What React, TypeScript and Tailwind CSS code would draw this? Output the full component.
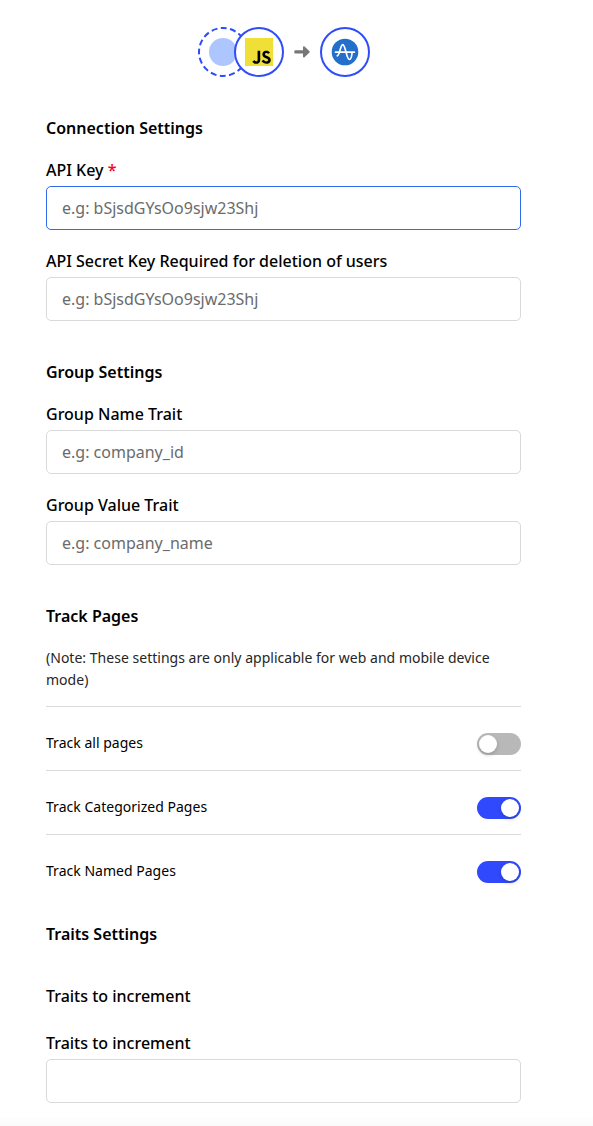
import React from "react";
import { SiJavascript } from "react-icons/si";

function ConnectionIcons() {
  return (
    <div className="ml-[152px] flex h-[50px] items-center">
      <svg className="size-[50px] shrink-0" viewBox="0 0 50 50" fill="none">
        <circle cx="25" cy="25" r="24" stroke="#2f4cfa" strokeWidth="2" strokeDasharray="6 3.425" strokeDashoffset="3" />
        <circle cx="25" cy="25" r="14" fill="#adc6ff" />
      </svg>
      <div className="z-10 -ml-3.5 flex size-[50px] shrink-0 items-center justify-center rounded-full border-2 border-[#2f4cfa] bg-white">
        <SiJavascript className="size-7 bg-black text-[#f0df36]" />
      </div>
      <svg className="mb-px ml-2.5 h-3 w-4 shrink-0" viewBox="0 0 16 12">
        <path d="M1.6 4.3H9V1.2c0-.9.9-1.2 1.5-.6l5 4.7c.4.4.4.8 0 1.2l-5 4.7c-.6.6-1.5.3-1.5-.6V7.5H1.6C.6 7.5.3 6.9.3 5.9s.3-1.6 1.3-1.6Z" fill="#777" />
      </svg>
      <div className="ml-2.5 flex size-[50px] shrink-0 items-center justify-center rounded-full border-2 border-[#2f4cfa] bg-white">
        <svg className="size-7" viewBox="0 0 28 28" fill="none">
          <circle cx="14" cy="14" r="13.3" fill="#246fcb" />
          <path d="M4.5 14.2H23.3M6.3 17.8C9 17.2 9.2 6.6 11.8 6.6c2.7 0 3.6 14.9 6.6 14.9 2 0 2.4-3.8 2.7-7.3" stroke="#fff" strokeWidth="1.7" strokeLinecap="round" strokeLinejoin="round" />
        </svg>
      </div>
    </div>
  );
}

function Heading({ children, className = "" }: { children: React.ReactNode; className?: string }) {
  return <h2 className={`font-semibold ${className}`}>{children}</h2>;
}

interface FieldProps {
  label: string;
  placeholder?: string;
  required?: boolean;
  active?: boolean;
  className?: string;
}

function Field({ label, placeholder, required, active, className = "mt-5" }: FieldProps) {
  return (
    <label className={`block font-medium ${className}`}>
      <span className="block">
        {label}
        {required && <span className="text-[#ff0018]"> *</span>}
      </span>
      <input
        type="text"
        placeholder={placeholder}
        className={`mt-[5px] block h-11 w-full rounded-[5px] border bg-white px-[15px] font-normal outline-none placeholder:text-[#6b6b6b] ${
          active ? "border-[#2f6bed]" : "border-[#d9d9d9]"
        }`}
      />
    </label>
  );
}

function ToggleRow({ label, on, last }: { label: string; on?: boolean; last?: boolean }) {
  return (
    <div className={`flex justify-between pt-[26px] ${last ? "" : "border-b border-[#d9d9d9] pb-[15px]"}`}>
      <span className="-mt-px h-[22px] text-sm leading-[22px] tracking-[0.02px]">{label}</span>
      <button
        type="button"
        role="switch"
        aria-checked={!!on}
        aria-label={label}
        className={`flex h-[22px] w-11 rounded-full p-0.5 ${on ? "justify-end bg-[#3049fd]" : "justify-start bg-[#b8b8b8]"}`}
      >
        <span className="size-[18px] rounded-full bg-white shadow-[0_2px_4px_rgba(0,35,11,0.2)]" />
      </button>
    </div>
  );
}

export default function App() {
  return (
    <main className="flex h-[1126px] w-full flex-col overflow-hidden bg-white font-['Noto_Sans',sans-serif] text-base leading-[22px] text-black">
      <div className="ml-[46px] w-[475px] flex-1 pt-[27px]">
        <ConnectionIcons />

        <Heading className="mt-10">Connection Settings</Heading>
        <Field label="API Key" placeholder="e.g: bSjsdGYsOo9sjw23Shj" required active />
        <Field label="API Secret Key Required for deletion of users" placeholder="e.g: bSjsdGYsOo9sjw23Shj" />

        <Heading className="mt-10">Group Settings</Heading>
        <Field label="Group Name Trait" placeholder="e.g: company_id" />
        <Field label="Group Value Trait" placeholder="e.g: company_name" />

        <Heading className="mt-10">Track Pages</Heading>
        <p className="mt-5 border-b border-[#d9d9d9] pb-[15px] text-sm leading-[22px] tracking-[0.02px] text-[#262626]">
          (Note: These settings are only applicable for web and mobile device mode)
        </p>
        <ToggleRow label="Track all pages" />
        <ToggleRow label="Track Categorized Pages" on />
        <ToggleRow label="Track Named Pages" on last />

        <Heading className="mt-10">Traits Settings</Heading>
        <h3 className="mt-10 font-medium">Traits to increment</h3>
        <Field label="Traits to increment" className="mt-[25px]" />
      </div>
      <div className="h-2.5 shrink-0 bg-linear-to-b from-white to-[#fafafa]" />
    </main>
  );
}
